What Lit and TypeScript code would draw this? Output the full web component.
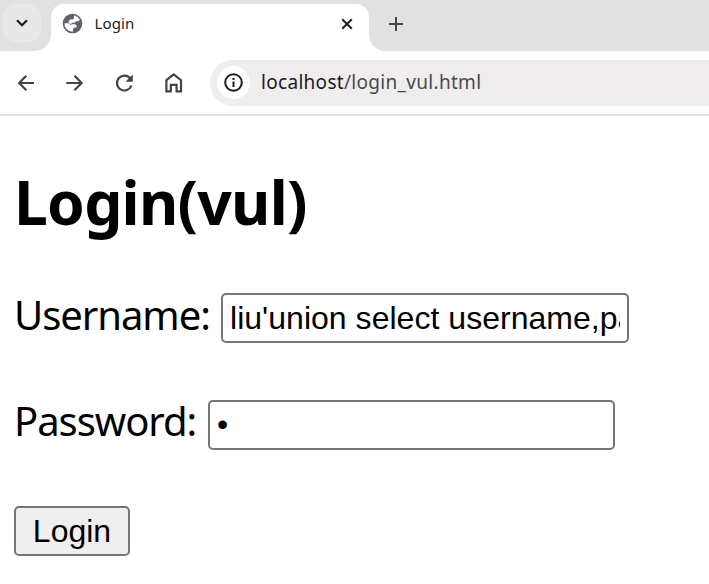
import { LitElement, html, css } from "lit";
import { customElement } from "lit/decorators.js";

@customElement("browser-chrome")
class BrowserChrome extends LitElement {
  static styles = css`
    :host { display: block; font-family: "Noto Sans", sans-serif; }
    svg { display: block; flex: none; fill: none; }
    .strip { height: 51px; background: #e1e1e1; display: flex; align-items: flex-start; }
    .search { width: 38px; height: 38px; margin: 4px 9.5px 0 3px; border-radius: 13px; background: #e8e8e8; display: grid; place-items: center; flex: none; }
    .tab { position: relative; width: 318.5px; height: 47px; margin-top: 4px; box-sizing: border-box; padding: 0 15px 8px 11px; background: #fff; border-radius: 13px 13px 0 0; display: flex; align-items: center; flex: none; }
    .tab::before, .tab::after { content: ""; position: absolute; bottom: 0; width: 16px; height: 16px; }
    .tab::before { right: 100%; background: radial-gradient(circle at 0 0, transparent 15.5px, #fff 16.2px); }
    .tab::after { left: 100%; background: radial-gradient(circle at 100% 0, transparent 15.5px, #fff 16.2px); }
    .title { margin: -2px 0 0 12px; flex: 1; font-size: 15px; line-height: 20px; color: #222; letter-spacing: 0.1px; }
    .plus { margin: 16px 0 0 19px; }
    .bar { height: 63px; display: flex; align-items: center; background: #fff; border-bottom: 2px solid #e1e1e1; }
    .nav { display: flex; gap: 25px; padding-left: 14px; }
    .address { margin-left: 25px; flex: 1; height: 46px; background: #efedee; border-radius: 23px 0 0 23px; display: flex; align-items: center; padding-left: 7px; }
    .info { width: 33px; height: 33px; border-radius: 50%; background: #fff; display: grid; place-items: center; }
    .url { margin: -2px 0 0 11px; font-size: 19px; line-height: 26px; color: #4a4a4a; white-space: nowrap; letter-spacing: 0.3px; }
    .host { color: #1b1b1b; }
  `;
  render() {
    return html`
      <div class="strip">
        <div class="search">
          <svg width="14" height="10" viewBox="0 0 14 10" stroke="#1d1d1d" stroke-width="2.2"><path d="M2 2.3 7 7.3 12 2.3" /></svg>
        </div>
        <div class="tab">
          <svg width="21" height="21" viewBox="0 0 21 21">
            <circle cx="10.5" cy="10.5" r="9.8" fill="#5f6368" />
            <path fill="#fff" d="M12 2.6C14.600 3 16.800 4.600 17.900 6.800L16.200 8.300H14.200L12.500 9.700H9.500V11.300H13.200L14.600 12.600V14.500H12.300L11 16V18.500C7 18.800 3.400 16 2.600 12.200V10.300H6.700L9 12.300 10 12.100 6.600 9.700V8.300L8.200 6.600H10.800L12 5.200Z" />
          </svg>
          <span class="title">Login</span>
          <svg width="14" height="14" viewBox="0 0 14 14" stroke="#1d1d1d" stroke-width="2"><path d="M2.2 2.2 11.8 11.8M11.8 2.2 2.2 11.8" /></svg>
        </div>
        <svg class="plus" width="16" height="16" viewBox="0 0 16 16" stroke="#444" stroke-width="2"><path d="M8 1V15M1 8H15" /></svg>
      </div>
      <div class="bar">
        <div class="nav">
          <svg width="24" height="24" viewBox="0 0 24 24" stroke="#444" stroke-width="2.2"><path d="M20 12H5.500M12.300 4.800 5.200 12 12.300 19.200" /></svg>
          <svg width="24" height="24" viewBox="0 0 24 24" stroke="#444" stroke-width="2.2"><path d="M3.300 12H18.300M11.500 4.800 18.600 12 11.500 19.200" /></svg>
          <svg width="24" height="24" viewBox="0 0 24 24" stroke="#444" stroke-width="2.2"><path d="M18.400 7.700A7.400 7.400 0 1 0 19.400 14.500" /><path d="M20.800 3.500V10.800H13.500Z" fill="#444" stroke="none" /></svg>
          <svg width="24" height="24" viewBox="0 0 24 24" stroke="#444" stroke-width="2.2"><path d="M5.400 9.200 12.700 3.400 20 9.200V20.300H15.600V13.800H9.800V20.300H5.400Z" /></svg>
        </div>
        <div class="address">
          <div class="info">
            <svg width="19" height="19" viewBox="0 0 19 19" stroke="#1d1d1d" stroke-width="2"><circle cx="9.5" cy="9.5" r="8.3" /><path d="M9.5 8.5V14M9.5 5V7" /></svg>
          </div>
          <div class="url"><span class="host">localhost</span>/login_vul.html</div>
        </div>
      </div>`;
  }
}

@customElement("login-form")
class LoginForm extends LitElement {
  static styles = css`
    :host { display: block; padding: 0 14px; color: #000; font-family: "Noto Sans", sans-serif; }
    h1 { margin: 0; padding-top: 45px; height: 130px; box-sizing: border-box; font-size: 60.5px; line-height: 82px; font-weight: 700; letter-spacing: -0.75px; white-space: nowrap; }
    .row { display: flex; align-items: center; height: 50px; margin: 47px 0 57px; }
    .row + .row { margin-top: 0; margin-bottom: 56px; }
    label { font-size: 40px; line-height: 50px; letter-spacing: -1.05px; white-space: nowrap; flex: none; padding-bottom: 7px; box-sizing: border-box; }
    .user { width: 207px; }
    .pass { width: 194px; padding-bottom: 9px; }
    input { width: 408px; height: 50px; box-sizing: border-box; margin: 0; border: 2px solid #767676; border-radius: 5px; padding: 0 7px; font: 32px "Liberation Sans", Arial, sans-serif; letter-spacing: 0.03px; color: #000; background: #fff; outline: none; flex: none; }
    input[type="password"] { width: 407px; padding-bottom: 2px; }
    button { display: block; width: 116px; height: 50px; margin: 0; padding: 0; border: 2px solid #767676; border-radius: 5px; background: #efefef; font: 32px "Liberation Sans", Arial, sans-serif; color: #000; }
  `;
  render() {
    return html`
      <h1>Login(vul)</h1>
      <div class="row"><label class="user" for="u">Username:</label><input id="u" value="liu'union select username,password" /></div>
      <div class="row"><label class="pass" for="p">Password:</label><input id="p" type="password" value="1" /></div>
      <button>Login</button>`;
  }
}

@customElement("app-root")
class AppRoot extends LitElement {
  static styles = css`
    :host { display: block; height: 584px; overflow: hidden; background: #fff; }
  `;
  render() {
    return html`<browser-chrome></browser-chrome><login-form></login-form>`;
  }
}
